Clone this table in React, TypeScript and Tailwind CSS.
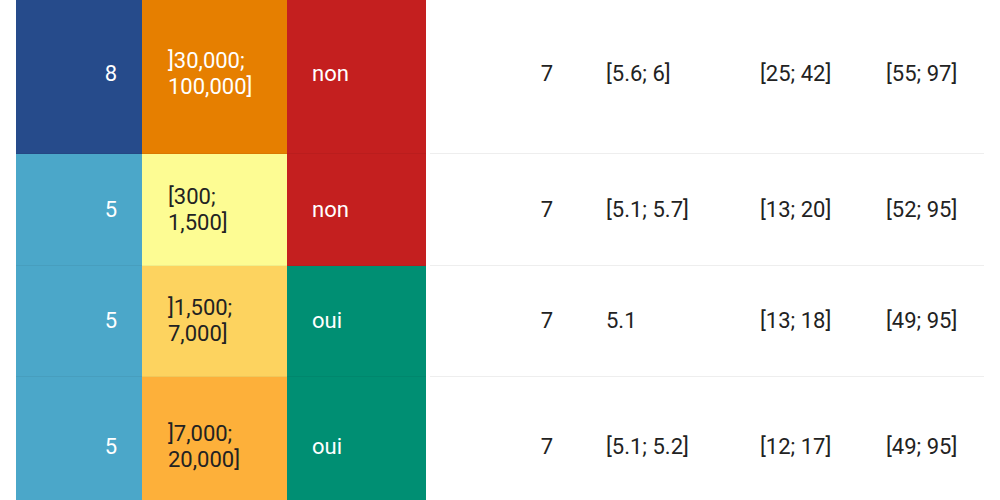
const ROWS = [
  { n: '8', nBg: 'bg-[#264b8b]', range: [']30,000;', '100,000]'], rBg: 'bg-[#e67f00]', rText: 'text-white', ok: 'non', okBg: 'bg-[#c41f1f]', a: '7', b: '[5.6; 6]', c: '[25; 42]', d: '[55; 97]', h: 'h-[160px] -mt-[6px]' },
  { n: '5', nBg: 'bg-[#4ba7c9]', range: ['[300;', '1,500]'], rBg: 'bg-[#fdfc93]', rText: 'text-[#222]', ok: 'non', okBg: 'bg-[#c41f1f]', a: '7', b: '[5.1; 5.7]', c: '[13; 20]', d: '[52; 95]', h: 'h-[112px]' },
  { n: '5', nBg: 'bg-[#4ba7c9]', range: [']1,500;', '7,000]'], rBg: 'bg-[#fdd35f]', rText: 'text-[#222]', ok: 'oui', okBg: 'bg-[#008f73]', a: '7', b: '5.1', c: '[13; 18]', d: '[49; 95]', h: 'h-[111px]' },
  { n: '5', nBg: 'bg-[#4ba7c9]', range: [']7,000;', '20,000]'], rBg: 'bg-[#fdb03a]', rText: 'text-[#222]', ok: 'oui', okBg: 'bg-[#008f73]', a: '7', b: '[5.1; 5.2]', c: '[12; 17]', d: '[49; 95]', h: 'h-[140px]' },
];

export default function App() {
  return (
    <div className="h-[500px] w-[1000px] overflow-hidden bg-white pl-4 text-[22px] leading-[26px] text-[#222]" style={{ fontFamily: 'Roboto, "Liberation Sans", sans-serif' }}>
      {ROWS.map((r, i) => (
        <div key={i} className={`flex ${r.h}`}>
          <div className={`flex w-[126px] items-center justify-end border-b border-black/5 pr-[25px] text-white ${r.nBg}`}>{r.n}</div>
          <div className={`flex w-[145px] items-center border-b border-black/5 pl-[26px] ${r.rBg} ${r.rText}`}>
            <div>{r.range[0]}<br />{r.range[1]}</div>
          </div>
          <div className={`flex w-[139px] items-center border-b border-black/5 pl-[25px] text-white ${r.okBg}`}>{r.ok}</div>
          <div className="ml-1 flex w-[554px] items-center border-b border-[#eeeeee]">
            <div className="w-[123px] text-right">{r.a}</div>
            <div className="w-[207px] pl-[53px]">{r.b}</div>
            <div className="w-[126px]">{r.c}</div>
            <div>{r.d}</div>
          </div>
        </div>
      ))}
    </div>
  );
}
